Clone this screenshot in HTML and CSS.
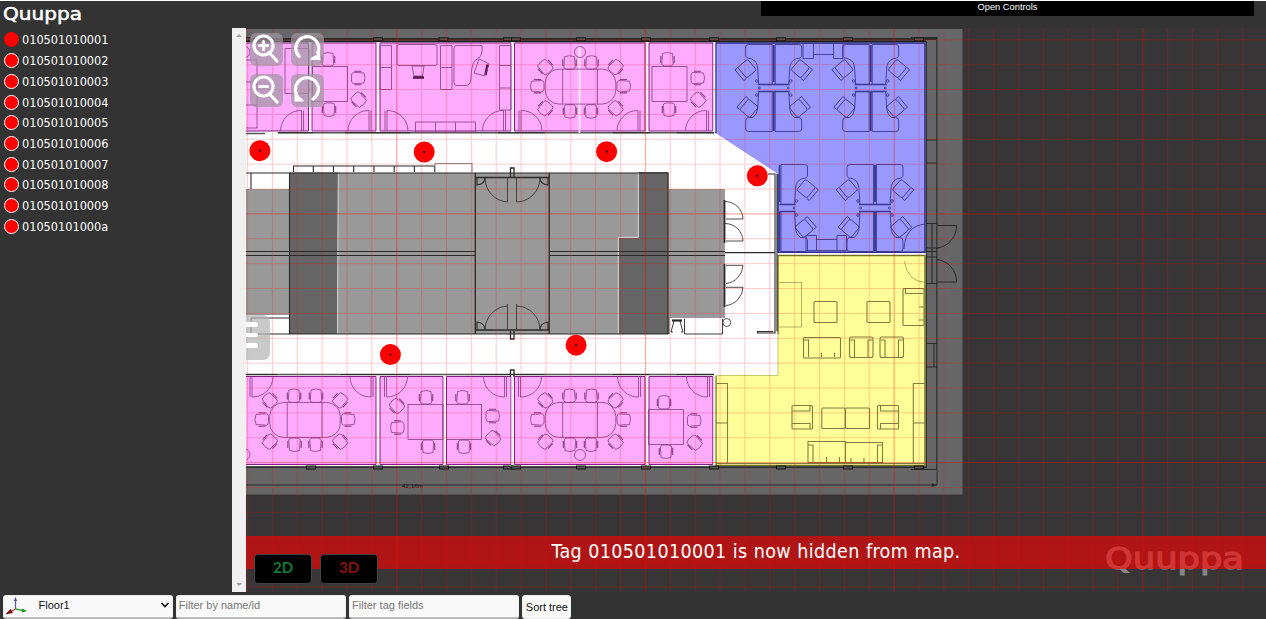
FILE: index.html
```html
<!DOCTYPE html>
<html lang="en">
<head>
<meta charset="utf-8">
<title>Quuppa</title>
<link rel="stylesheet" href="styles.css">
</head>
<body>
<div class="app">
  <header class="topbar">
    <svg class="logo" width="86" height="28" viewBox="0 0 86 28"><text x="3" y="18.500" font-size="17.500" textLength="79" lengthAdjust="spacingAndGlyphs">Quuppa</text></svg>
    <div class="controls-toggle">Open Controls</div>
  </header>
  <main class="content">
    <ul class="tag-tree">
      <li><i class="dot hidden-tag"></i>010501010001</li>
      <li><i class="dot"></i>010501010002</li>
      <li><i class="dot"></i>010501010003</li>
      <li><i class="dot"></i>010501010004</li>
      <li><i class="dot"></i>010501010005</li>
      <li><i class="dot"></i>010501010006</li>
      <li><i class="dot"></i>010501010007</li>
      <li><i class="dot"></i>010501010008</li>
      <li><i class="dot"></i>010501010009</li>
      <li><i class="dot"></i>01050101000a</li>
    </ul>
    <div class="scrollbar"><i class="arrow up"></i><i class="arrow down"></i></div>
    <section class="map">
      <svg class="plan" width="1020" height="564" viewBox="246 28 1020 564">
        <defs>
          <pattern id="minor" patternUnits="userSpaceOnUse" x="396.2" y="213.4" width="24.87" height="24.87"><path d="M0 0V24.87M0 0H24.87" stroke="#f00" stroke-opacity=".2" stroke-width="2.200"/></pattern>
          <pattern id="major" patternUnits="userSpaceOnUse" x="396.2" y="213.4" width="248.7" height="248.7"><path d="M0 0V248.7M0 0H248.7" stroke="#f00" stroke-opacity=".22" stroke-width="2.200"/></pattern>
          <g id="chair"><path d="M-5-5.500Q0-7.500 5-5.500L5.700 5Q5 7 3 7H-3Q-5 7-5.700 5Z"/><path d="M-6.700-3V4M6.700-3V4" stroke-width="1.100"/></g>
          <g id="meeting">
            <rect x="-35.300" y="-17.600" width="70.600" height="35" rx="14"/><path d="M-17.800-17.600V17.400M17-17.600V17.400"/>
            <use href="#chair" x="-11" y="-24.500"/><use href="#chair" x="11" y="-24.500"/>
            <use href="#chair" transform="translate(-10.500 25)rotate(180)"/><use href="#chair" transform="translate(10.500 25)rotate(180)"/>
            <use href="#chair" transform="translate(-43.500 -.5)rotate(-90)"/><use href="#chair" transform="translate(43.500 -.5)rotate(90)"/>
            <use href="#chair" transform="translate(-35.500 -20)rotate(-42)"/><use href="#chair" transform="translate(35.500 -20)rotate(42)"/>
            <use href="#chair" transform="translate(-35.500 22)rotate(-138)"/><use href="#chair" transform="translate(35.500 22)rotate(138)"/>
          </g>
          <g id="seat"><rect x="-7" y="-7" width="13" height="14" rx="2"/><path d="M6-7H9.500V7H6"/></g>
          <g id="desk">
            <path d="M1.500-43.500H25Q28-43.500 28-41V-33Q28-29.500 23-29.500Q16-27 16-19L15-3.500H1.500ZM1.500 3.500H15L16 19Q16 26 21 29.500H25Q28 29.500 28 33V41Q28 43.500 25 43.500H1.500Z"/>
            <path d="M0-43V-6M0 4V43" stroke-width="1.500"/><path d="M0-3.500H16M0 3.500H16" stroke-width="1.300"/>
            <circle cx="14.500" cy="0" r="1"/><circle cx="17" cy="-7" r="1.300"/><circle cx="17" cy="7" r="1.300"/>
            <use href="#seat" transform="translate(27 -19)rotate(40)"/><use href="#seat" transform="translate(25 20)rotate(-40)"/>
          </g>
          <g id="pair"><use href="#desk"/><use href="#desk" transform="scale(-1 1)"/></g>
          <g id="doorL"><path d="M0 0V20.500M2 0V20.500M0 0A20.500 20.500 0 0 0-21 20.500"/></g>
          <g id="column"><rect x="-4.500" y="-1.500" width="9" height="3"/></g>
          <g id="marker"><circle r="10.500" fill="red"/><circle r="1.100" fill="#200"/></g>
        </defs>
        <rect x="246" y="28" width="1020" height="564" fill="#383536"/>
        <rect x="246" y="29" width="716.500" height="465.500" fill="#666"/>
        <rect x="246" y="41" width="680" height="426" fill="#fff"/>

        <g fill="#ffabff" stroke="#851c85" stroke-width="1">
          <path d="M245 43H308.500V131H245ZM312 43H376V131H312ZM380 43H511V131H380ZM514.500 43H645V131H514.500ZM649 43H712.800V131H649Z"/>
          <path d="M245 376.500H376V464.500H245ZM380 376.500H443V464.500H380ZM446.500 376.500H511V464.500H446.500ZM514.500 376.500H645V464.500H514.500ZM649 376.500H712.800V464.500H649Z"/>
        </g>
        <path d="M715.500 43H925V252H778V174L715.500 133Z" fill="#9999fd"/>
        <path d="M715.800 133V43H925V252.300H778V174" fill="none" stroke="#29298c" stroke-width="1.500"/>
        <path d="M778 255.500H925V465.500H715.700V375.500H778Z" fill="#ff9" stroke="#c8c86a"/>
        <path d="M716 376V465.500H925V255.500H778V334" fill="none" stroke="#70701e" stroke-width="1.300"/>

        <g fill="#999">
          <path d="M246 189H289.500V315H246ZM338 173H638V237H618V334H338ZM668.500 189H725V318H668.500Z"/>
          <path d="M289.500 172.500H338L337.500 334H289.500ZM638.500 172H668.500V334H618.500V237.500H638.500Z" fill="#656565"/>
        </g>
        <path d="M338.300 174L337.500 334M289.500 189V315M638.300 173V237.300H618.300V333" stroke="#d0d0d0" fill="none"/>

        <!-- structural walls -->
        <g fill="none" stroke="#2a2a2a" stroke-width="1.100">
          <path d="M246 39H937M246 41.300H926M246 467H926" stroke="#1c1c1c" stroke-width="1.700"/>
          <path d="M926.300 41V468M936.800 37V469.500M911 37.500H937M911 469.500H937M926 140H937M926 163H937M926 223.500H937M926 248H937M926 251.500H937M926 257H937M926 283.500H937M926 343.500H937M926 367H937M932 223V283M934 343V367"/>
          <path d="M278 132.700H714M246 133.500H265M246 374.500H714" stroke="#555" stroke-width="1.500"/>
          <path d="M278 132.700H313M345 132.700H410M498 132.700H545M613 132.700H650M677 132.700H714M246 374.500H277M341 374.500H410M480 374.500H545M613 374.500H650M677 374.500H714"/>
          <path d="M246 173H668M289.500 173V334H338M618 334H668V173M246 334H618M251 173V189M251 318H289.500M251 318V334"/>
          <path d="M246 251.500H475M246 255.500H475M549.200 251.500H725M549.200 255.500H725M725 252.600H775"/>
          <path d="M475.300 173V334M549.200 173V334M476 177.500H549M476 330H549" stroke-width="1.300"/>
          <path d="M768 174H775V333H757.500V331.500H773M777 174V331"/>
          <path d="M724.500 200V243M724.500 264V307" stroke-width="1.800"/>
          <path d="M669 318V334M684.500 318.500V334H722.500V319M671 332L674 321M683 332L680 321M671 332H673M681 332H683" stroke-width=".9"/><path d="M672 320.500H682" stroke-width="2.200"/>
          <path d="M510.500 177V168H514V177M510.500 331V339H514V331M510.500 377V370H514V377" stroke-width="1.300"/>
          <path d="M293.500 172V166H434.500V172M313.300 166V172M333.500 166V172M353.700 166V172M374 166V172M394.200 166V172M414.400 166V172"/>
          <path d="M435 172V163.500H472V172" stroke="#888"/>
          <path d="M477 178V185Q485 184 485 178M548 178V185Q540 184 540 178M477 330V322Q485 323 485 330M548 330V322Q540 323 540 330"/>
        </g>
        <g fill="none" stroke="#3a3a3a" stroke-width=".9">
          <path d="M507.500 177V202M516.500 177V202M507.500 202A24 24 0 0 1 485 178M516.500 202A24 24 0 0 0 540 178M507.500 330V304M516.500 330V304M507.500 306A24 24 0 0 0 485 329M516.500 306A24 24 0 0 1 540 329"/>
          <path d="M725 201.500A18 18 0 0 1 743 219H726M725 223.500A18 18 0 0 1 743 241H726M726 265.300H743A19 19 0 0 1 726 283.500M726 287.300H743A19 19 0 0 1 726 305.500"/>
          <circle cx="726.800" cy="322.500" r="4"/>
          <path d="M937 225.500H956.500A22 22 0 0 1 937 248M937 259.500A22 22 0 0 1 956.500 282H937" stroke="#222"/>
          <path d="M246 485H937V470" stroke="#222"/><path d="M932 483.500L936.500 485L932 486.500Z" fill="#111"/>
        </g>
        <g fill="#555" stroke="#161616">
          <use href="#column" x="246" y="39.300"/><use href="#column" x="378" y="39.300"/><use href="#column" x="443.500" y="39.300"/><use href="#column" x="508" y="39.300"/><use href="#column" x="516" y="39.300"/><use href="#column" x="581" y="39.300"/><use href="#column" x="646" y="39.300"/><use href="#column" x="714" y="39.300"/><use href="#column" x="781" y="39.300"/><use href="#column" x="848" y="39.300"/><use href="#column" x="919" y="39.300"/>
          <use href="#column" x="311" y="467.500"/><use href="#column" x="378" y="467.500"/><use href="#column" x="444" y="467.500"/><use href="#column" x="508" y="467.500"/><use href="#column" x="516" y="467.500"/><use href="#column" x="581" y="467.500"/><use href="#column" x="646" y="467.500"/><use href="#column" x="714" y="467.500"/><use href="#column" x="781" y="467.500"/><use href="#column" x="848" y="467.500"/><use href="#column" x="919" y="467.500"/>
        </g>
        <path d="M310.300 43V132M378 42V131M512.300 42V132M579.500 46V133M647 42V132M714.500 42V132M378 376V465M444.700 376V465M512.300 376V465M647 376V465M714.500 376V465" stroke="#eee" stroke-width="1.700"/>

        <!-- meeting rooms and offices -->
        <g fill="none" stroke="#833f83" stroke-width=".8">
          <use href="#meeting" x="580.500" y="86.700"/><use href="#meeting" x="580.500" y="420"/><use href="#meeting" x="305" y="420"/>
          <circle cx="580" cy="52" r="5.500"/><circle cx="580" cy="455" r="5.500"/><circle cx="244.500" cy="52" r="5.500"/><circle cx="244.500" cy="454.500" r="5.500"/>
          <rect x="312.500" y="66.500" width="35" height="35"/><use href="#chair" x="328" y="59"/><use href="#chair" transform="translate(329 110)rotate(180)"/><use href="#chair" transform="translate(358.500 78)rotate(90)"/><use href="#chair" transform="translate(359 100)rotate(135)"/>
          <rect x="652" y="66.500" width="35" height="35"/><use href="#chair" x="667.500" y="59"/><use href="#chair" transform="translate(669 110)rotate(180)"/><use href="#chair" transform="translate(698 78)rotate(90)"/><use href="#chair" transform="translate(698.500 100)rotate(135)"/>
          <rect x="408" y="404.500" width="35" height="35"/><use href="#chair" x="426" y="397"/><use href="#chair" transform="translate(428 447)rotate(180)"/><use href="#chair" transform="translate(397 427.500)rotate(-90)"/><use href="#chair" transform="translate(396.500 405.500)rotate(-45)"/>
          <rect x="446.500" y="404.500" width="35" height="35"/><use href="#chair" x="462.500" y="397"/><use href="#chair" transform="translate(464 447)rotate(180)"/><use href="#chair" transform="translate(493 416)rotate(90)"/><use href="#chair" transform="translate(493.500 438.500)rotate(135)"/>
          <rect x="648.500" y="409.500" width="35" height="35"/><use href="#chair" x="664" y="402"/><use href="#chair" transform="translate(666 452)rotate(180)"/><use href="#chair" transform="translate(694.500 420.500)rotate(90)"/><use href="#chair" transform="translate(695 443)rotate(135)"/>
          <path d="M285 48.500H309V93.500H285ZM246 60H257V128H246M246 82H257M246 105H257"/>
          <path d="M380 45.500H391.500V89.500H380ZM380 67.500H391.500M440.500 45.500H452V89.500H440.500ZM440.500 67.500H452M499.500 45.500H511V110H499.500ZM499.500 65.500H511M499.500 88H511"/>
          <rect x="397" y="44.500" width="40" height="21" rx="2"/><path d="M412 66H424L422.500 76H414Z"/><path d="M413 77.500H424M487.500 64.500L485.500 75" stroke="#4a164a" stroke-width="2.500"/>
          <path d="M456 45.500H482Q483 54 479 58Q471 60 471 78Q471 86 465 85.500H456Q454 85.500 454 82V48Q454 45.500 456 45.500ZM474 73L479 59Q484 61 489 64L485 76Z"/>
          <path d="M415.500 122H475.500V132H415.500ZM435.500 122V132M455.500 122V132"/>
          <use href="#doorL" x="301.500" y="110.500"/><use href="#doorL" x="369" y="110.500"/><use href="#doorL" x="503.500" y="110.500"/><use href="#doorL" x="638" y="110.500"/><use href="#doorL" x="706.500" y="110.500"/>
          <use href="#doorL" transform="translate(387 110.500)scale(-1 1)"/><use href="#doorL" transform="translate(521 110.500)scale(-1 1)"/>
          <use href="#doorL" transform="translate(371 397)scale(1 -1)"/><use href="#doorL" transform="translate(504.500 397)scale(1 -1)"/><use href="#doorL" transform="translate(638.500 397)scale(1 -1)"/><use href="#doorL" transform="translate(707.500 397)scale(1 -1)"/>
          <use href="#doorL" transform="translate(252 397)scale(-1 -1)"/><use href="#doorL" transform="translate(386.500 397)scale(-1 -1)"/><use href="#doorL" transform="translate(520.500 397)scale(-1 -1)"/>
        </g>
        <!-- open office -->
        <g fill="none" stroke="#3a3a93" stroke-width=".9">
          <use href="#pair" x="773.700" y="88"/><use href="#pair" x="870.700" y="88"/><use href="#pair" x="875" y="208"/><use href="#desk" x="779.500" y="208"/>
          <path d="M803 43.500H843V58.500H833.500V43.500M803 43.500V58.500H813.500V43.500M813.500 54.500H833.500M806 250.500H846.500V235.500H837V250.500M806 250.500V235.500H816.500V250.500M816.500 239.500H837"/>
          <path d="M925 224Q905 226 904 249"/>
        </g>
        <!-- lounge -->
        <g fill="none" stroke="#7f7f40" stroke-width="1.100">
          <rect x="814" y="301.500" width="23" height="21" rx="1"/><rect x="867" y="301.500" width="23" height="21" rx="1"/>
          <path d="M779 282.500H801.500V327H779M904.500 261Q907 281 925 282.500" stroke-width=".6"/>
          <rect x="803.500" y="337.500" width="37" height="20.500" rx="1"/><path d="M803.500 340H808.500V357M821.500 353V357M834.500 353V357"/>
          <rect x="849.500" y="337" width="23.500" height="20.500" rx="2"/><path d="M850 340H854.500V357M872.500 340H868V357"/>
          <rect x="880" y="337" width="23.500" height="20.500" rx="2"/><path d="M880.500 340H885V357M903 340H898.500V357"/>
          <rect x="903" y="288.500" width="21" height="37" rx="1"/><path d="M905.500 289V293.500H923M919 307H924M919 320H924"/>
          <rect x="792" y="405.500" width="20.500" height="23.500" rx="1"/><path d="M792 411H810V406M810 429V423.500H792"/>
          <rect x="821.800" y="408" width="23.500" height="20.500" rx="1"/><rect x="845.500" y="408" width="24" height="20.500" rx="1"/>
          <rect x="877.500" y="405.500" width="21" height="23.500" rx="1"/><path d="M898 411H880.500V406M880.500 429V423.500H898"/>
          <path d="M808 441.500H845.500V462.500H808ZM845.500 442.500H882.500V462.500H845.500ZM808 445H813V462M882 445H877.500V462M826.500 457V462M839.500 457V462M851 458V462M864 458V462"/>
          <path d="M716 383.500H727.500V463M716 423H727.500M925 383.500H913.300V463M913.300 423H925M716 463.500H925"/>
        </g>
        <text x="402" y="488" font-family="DejaVu Sans" font-size="5.500" fill="#111">42,16m</text>
        <rect x="246" y="28" width="1020" height="564" fill="url(#minor)"/><rect x="246" y="28" width="1020" height="564" fill="url(#major)"/>
        <use href="#marker" x="259.900" y="150.700"/><use href="#marker" x="424.200" y="152"/><use href="#marker" x="606.600" y="151.700"/><use href="#marker" x="757.300" y="175.800"/><use href="#marker" x="390.400" y="354.600"/><use href="#marker" x="576.100" y="345.200"/>
      </svg>
      <div class="map-tools">
        <button class="tool"><svg viewBox="0 0 33 33"><circle cx="13.500" cy="12.500" r="9.500"/><path d="M13.500 8.500V16.500M9.500 12.500H17.500M19.500 20L27 28"/></svg></button>
        <button class="tool"><svg viewBox="0 0 33 33"><path d="M8.300 23.500A11.500 11.500 0 1 1 26.700 20"/><path class="solid" d="M19 27L21 24L26 22L28.500 17.500L29.500 27Z"/></svg></button>
        <button class="tool"><svg viewBox="0 0 33 33"><circle cx="13.500" cy="12.500" r="9.500"/><path d="M9.500 12.500H17.500M19.500 20L27 28"/></svg></button>
        <button class="tool"><svg viewBox="0 0 33 33"><path d="M22 25A11.500 11.500 0 1 0 6 21"/><path class="solid" d="M3.500 18L6 21L11 24.500L13 27.500H3.500Z"/></svg></button>
      </div>
      <button class="menu-tab"><i></i><i></i><i></i></button>
      <svg class="watermark" width="146" height="40" viewBox="0 0 146 40"><text x="3" y="29" font-size="31" textLength="139" lengthAdjust="spacingAndGlyphs">Quuppa</text></svg>
      <div class="toast">Tag 010501010001 is now hidden from map.</div>
      <div class="view-modes"><button class="mode two">2D</button><button class="mode three">3D</button></div>
    </section>
  </main>
  <footer class="filters">
    <div class="field floor">
      <svg class="axes" width="22" height="20" viewBox="0 0 22 20"><path d="M9.500 12V3" stroke="#5a5ab0"/><path d="M8 4L9.500 0L11 4Z" fill="#44449a"/><path d="M9.500 12L4 15" stroke="#b33"/><path d="M1 16.500L4.500 13L6 15.500Z" fill="#911" stroke="#711"/><path d="M9.500 12L17 13.500" stroke="#3a3"/><path d="M16 11.500L21 14L16 15.500Z" fill="#191"/></svg>
      <span>Floor1</span>
      <svg class="chevron" width="10" height="8" viewBox="0 0 10 8"><path d="M1.500 2L5 5.500L8.500 2"/></svg>
    </div>
    <input class="field" placeholder="Filter by name/id">
    <input class="field" placeholder="Filter tag fields">
    <button class="sort">Sort tree</button>
  </footer>
</div>
</body>
</html>
```
FILE: styles.css
```css
* { box-sizing: border-box; }
body { margin: 0; background: #333; overflow: hidden; font-family: "Liberation Sans", Arial, sans-serif; }
button { border: 0; padding: 0; font-family: inherit; }
.app { height: 619px; display: grid; grid-template-rows: 27px 564px 27px; border-top: 1px solid #fff; background: #333; }
.topbar { display: flex; justify-content: space-between; align-items: flex-start; padding-right: 12px; }
.logo text, .watermark text { font-family: "DejaVu Sans", sans-serif; fill: #fff; stroke: #fff; }
.logo text { stroke-width: .5px; }
.controls-toggle { width: 493px; height: 15px; background: #000; color: #fff; font-size: 9.300px; line-height: 13px; text-align: center; }
.content { display: grid; grid-template-columns: 232px 14px 1fr; }
.tag-tree { list-style: none; margin: 0; padding: 1.500px 0 0 3.500px; color: #fff; font: 12.600px "DejaVu Sans Condensed", "DejaVu Sans", sans-serif; font-stretch: condensed; }
.tag-tree li { height: 20.730px; display: flex; align-items: center; gap: 3.500px; }
.dot { width: 15px; height: 15px; border-radius: 50%; background: red; border: 1.500px solid #fff; }
.dot.hidden-tag { border-color: red; }
.scrollbar { background: #f0f0f0; display: flex; flex-direction: column; justify-content: space-between; align-items: center; padding: 6px 0; }
.arrow { border: 3px solid transparent; }
.arrow.up { border-top: 0; border-bottom-color: #a3a3a3; }
.arrow.down { border-bottom: 0; border-top-color: #a3a3a3; }
.map { position: relative; overflow: hidden; }
.plan { display: block; }
.map-tools { position: absolute; left: 4px; top: 5px; display: grid; grid-template-columns: 33px 33px; gap: 8px; }
.tool { width: 33px; height: 33px; border-radius: 6px; background: rgba(160, 150, 160, .7); }
.tool svg { display: block; width: 33px; height: 33px; fill: none; stroke: #fff; stroke-width: 3.200px; stroke-linecap: round; }
.tool .solid { fill: #fff; stroke: none; }
.menu-tab { position: absolute; left: 0; top: 287px; width: 24px; height: 45px; border-radius: 0 7px 7px 0; background: rgba(180, 180, 180, .72); display: flex; flex-direction: column; justify-content: flex-start; gap: 6px; padding-top: 7px; }
.menu-tab i { width: 12px; height: 4.500px; border-radius: 0 3px 3px 0; background: #fff; }
.watermark { position: absolute; left: 856px; top: 512px; opacity: .4; }
.watermark text { stroke-width: 1.200px; }
.toast { position: absolute; left: 0; right: 0; top: 508px; height: 33px; background: rgba(255, 0, 0, .6); color: #fff; text-align: center; font: 19.500px/31px "DejaVu Sans Condensed", "DejaVu Sans", sans-serif; font-stretch: condensed; letter-spacing: .35px; word-spacing: .4px; }
.view-modes { position: absolute; left: 8px; top: 526px; display: flex; gap: 8px; }
.mode { width: 58px; height: 30px; border-radius: 4px; border: 1px solid #444; background: #000; font: bold 15px/22px Lato, sans-serif; padding-bottom: 4px; }
.two { color: #117a35; }
.three { color: #8d1111; }
.filters { display: flex; align-items: flex-start; gap: 3px; padding: 2.500px 0 0 2.500px; }
.field { width: 170.300px; height: 24px; border: 1px solid #eee; border-bottom: 2px solid #bbb; border-radius: 3px; background: #f9f9f9; padding: 0 1px 3px 2px; font: 11px "Liberation Sans", sans-serif; color: #111; }
.field::placeholder { color: #777; }
.floor { display: flex; align-items: center; }
.floor span { flex: 1; padding-left: 11px; }
.axes { margin-top: 5px; stroke-width: 1.300px; }
.chevron { fill: none; stroke: #111; stroke-width: 1.600px; margin-right: 1px; }
.sort { width: 49px; height: 24px; border-radius: 3px; border: 1px solid #eee; background: #f9f9f9; color: #111; font-size: 11px; white-space: nowrap; }
```
